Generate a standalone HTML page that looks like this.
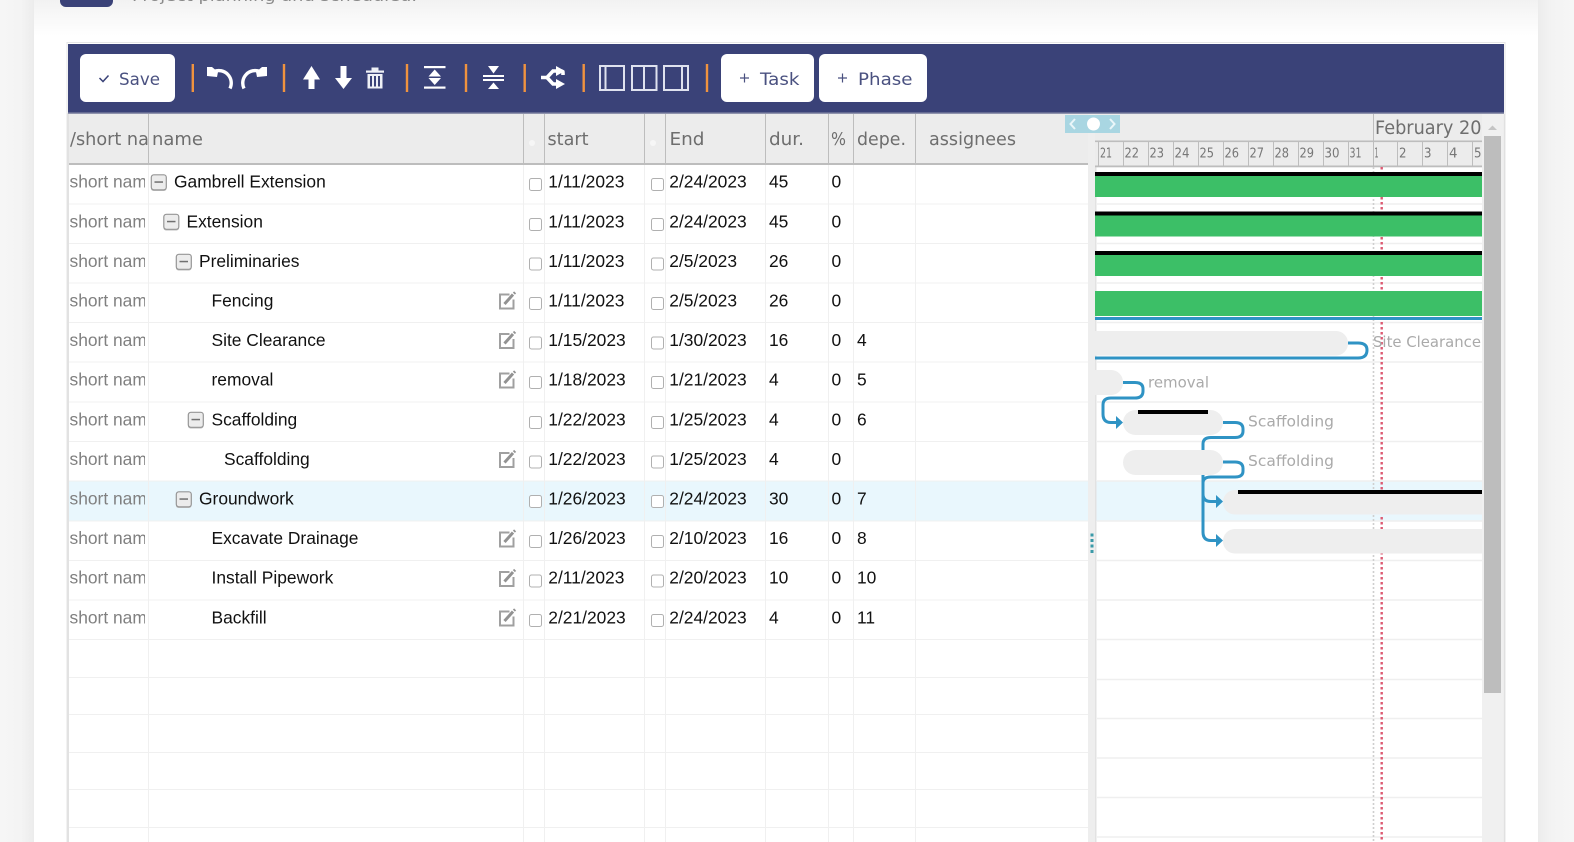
<!DOCTYPE html>
<html><head><meta charset="utf-8"><title>Gantt</title>
<style>
html,body{margin:0;padding:0;width:1574px;height:842px;overflow:hidden;background:#fff}
svg{display:block}
.h{font:17.5px "DejaVu Sans",sans-serif;fill:#6e6e6e}
.t{font:17.4px "Liberation Sans",Arial,sans-serif;fill:#111}
.s{font:17.4px "Liberation Sans",Arial,sans-serif;fill:#808080}
.d{font:13.5px "DejaVu Sans",sans-serif;fill:#777}
.l{font:15px "DejaVu Sans",sans-serif;fill:#aaa}
.b{font:16.5px "DejaVu Sans",sans-serif;fill:#4a5180}
.gl{stroke:#f0f0f0;stroke-width:1}
.vl{stroke:#f0f0f0;stroke-width:1}
.hv{stroke:#bdbdbd;stroke-width:1}
.sep{stroke:#f0933f;stroke-width:2.4}
.lnk{fill:none;stroke:#2f93c4;stroke-width:3}
</style></head><body>
<svg xmlns="http://www.w3.org/2000/svg" width="1574" height="842" viewBox="0 0 1574 842">
<defs>
<linearGradient id="lg" x1="0" x2="1" y1="0" y2="0"><stop offset="0" stop-color="#f6f6f6"/><stop offset=".6" stop-color="#f4f4f4"/><stop offset="1" stop-color="#ececec"/></linearGradient>
<linearGradient id="rg" x1="0" x2="1" y1="0" y2="0"><stop offset="0" stop-color="#ececec"/><stop offset=".4" stop-color="#f3f3f3"/><stop offset="1" stop-color="#f6f6f6"/></linearGradient>
<linearGradient id="tg" x1="0" x2="0" y1="0" y2="1"><stop offset="0" stop-color="#f2f2f2"/><stop offset="1" stop-color="#ffffff"/></linearGradient>
<clipPath id="c1"><rect x="68" y="114" width="77" height="560"/></clipPath>
<clipPath id="c0"><rect x="68" y="114" width="80" height="50"/></clipPath>
<clipPath id="c2"><rect x="1095" y="114" width="387" height="728"/></clipPath>
<g id="cb"><rect x="0.5" y="0.5" width="12" height="12" rx="2" fill="#fff" stroke="#b0b0b0"/></g>
<g id="mn"><rect x="0.5" y="1.500" width="15.500" height="15.500" rx="2.500" fill="#bdbdbd"/><rect x="0.8" y="0.8" width="15" height="15" rx="2.500" fill="#ececec" stroke="#969696" stroke-width="1.200"/><rect x="4" y="7.300" width="8.500" height="1.500" fill="#707070"/></g>
<g id="ed"><path d="M11 3H1.500V17H15V8" fill="none" stroke="#a0a0a0" stroke-width="2"/><path d="M6 12.500L14.500 3" stroke="#929292" stroke-width="3" fill="none"/><path d="M15 0.500L17 2.500" stroke="#929292" stroke-width="1.800" fill="none"/></g>
</defs>

<rect width="1574" height="842" fill="#fff"/>
<rect x="0" y="0" width="34" height="842" fill="url(#lg)"/>
<rect x="1538" y="0" width="36" height="842" fill="url(#rg)"/>
<rect x="34" y="0" width="1504" height="36" fill="url(#tg)"/>

<path d="M60 0H113V1a6 6 0 0 1-6 6H66a6 6 0 0 1-6-6z" fill="#3a4278"/>
<text x="132" y="1" font-family="DejaVu Sans, sans-serif" font-size="15" fill="#8a8a8a" textLength="285" lengthAdjust="spacingAndGlyphs">Project planning and scheduled.</text>

<!-- frame -->
<rect x="67" y="42.5" width="1438" height="800" fill="#fff" stroke="#e6e6e6"/>
<rect x="67" y="113" width="2" height="729" fill="#e2e2e2"/>

<!-- highlight row -->
<rect x="69" y="481" width="1019" height="40" fill="#e9f7fd"/>
<rect x="1096" y="481" width="386" height="40" fill="#e9f7fd"/>

<!-- grid row lines -->
<g class="gl">
<path d="M69 204H1088M69 243.5H1088M69 283H1088M69 322.5H1088M69 362H1088M69 402H1088M69 441.5H1088M69 481H1088M69 521H1088M69 560.5H1088M69 600H1088M69 639.5H1088M69 677.5H1088M69 714.5H1088M69 752.5H1088M69 789.5H1088M69 827.5H1088"/>
</g>
<g class="vl"><path d="M148.5 164V842M523.5 164V842M544.5 164V842M644.5 164V842M665.5 164V842M765.5 164V842M828.5 164V842M853.5 164V842M915.5 164V842"/></g>

<!-- table header -->
<rect x="69" y="114" width="1019" height="49" fill="#ececec"/>
<rect x="69" y="163" width="1019" height="2" fill="#bdbdbd"/>
<g class="hv"><path d="M148.5 114V163M523.5 114V163M544.5 114V163M644.5 114V163M665.5 114V163M765.5 114V163M828.5 114V163M853.5 114V163M915.5 114V163"/></g>
<circle cx="532" cy="143" r="3" fill="#f6f6f6"/><circle cx="653" cy="143" r="3" fill="#f6f6f6"/>
<g clip-path="url(#c0)"><text class="h" x="70" y="145" textLength="107" lengthAdjust="spacingAndGlyphs">/short name</text></g>
<text class="h" x="152" y="145" textLength="51" lengthAdjust="spacingAndGlyphs">name</text>
<text class="h" x="547.5" y="145" textLength="41" lengthAdjust="spacingAndGlyphs">start</text>
<text class="h" x="669.5" y="145" textLength="35" lengthAdjust="spacingAndGlyphs">End</text>
<text class="h" x="769" y="145" textLength="35" lengthAdjust="spacingAndGlyphs">dur.</text>
<text class="h" x="831" y="145" textLength="15" lengthAdjust="spacingAndGlyphs">%</text>
<text class="h" x="857" y="145" textLength="49" lengthAdjust="spacingAndGlyphs">depe.</text>
<text class="h" x="929" y="145" textLength="87" lengthAdjust="spacingAndGlyphs">assignees</text>

<!-- short name col -->
<g clip-path="url(#c1)">
<text class="s" x="69.5" y="187.7">short name</text>
<text class="s" x="69.5" y="227.3">short name</text>
<text class="s" x="69.5" y="266.9">short name</text>
<text class="s" x="69.5" y="306.5">short name</text>
<text class="s" x="69.5" y="346.1">short name</text>
<text class="s" x="69.5" y="385.7">short name</text>
<text class="s" x="69.5" y="425.3">short name</text>
<text class="s" x="69.5" y="464.9">short name</text>
<text class="s" x="69.5" y="504.5">short name</text>
<text class="s" x="69.5" y="544.1">short name</text>
<text class="s" x="69.5" y="583.7">short name</text>
<text class="s" x="69.5" y="623.3">short name</text>
</g>

<g transform="translate(0,-0.8)">
<!-- names -->
<text class="t" x="174" y="188.5">Gambrell Extension</text>
<text class="t" x="186.5" y="228.1">Extension</text>
<text class="t" x="199" y="267.7">Preliminaries</text>
<text class="t" x="211.5" y="307.3">Fencing</text>
<text class="t" x="211.5" y="346.9">Site Clearance</text>
<text class="t" x="211.5" y="386.5">removal</text>
<text class="t" x="211.5" y="426.1">Scaffolding</text>
<text class="t" x="224" y="465.7">Scaffolding</text>
<text class="t" x="199" y="505.3">Groundwork</text>
<text class="t" x="211.5" y="544.9">Excavate Drainage</text>
<text class="t" x="211.5" y="584.5">Install Pipework</text>
<text class="t" x="211.5" y="624.1">Backfill</text>

<!-- start dates -->
<text class="t" x="548.3" y="188.5">1/11/2023</text>
<text class="t" x="548.3" y="228.1">1/11/2023</text>
<text class="t" x="548.3" y="267.7">1/11/2023</text>
<text class="t" x="548.3" y="307.3">1/11/2023</text>
<text class="t" x="548.3" y="346.9">1/15/2023</text>
<text class="t" x="548.3" y="386.5">1/18/2023</text>
<text class="t" x="548.3" y="426.1">1/22/2023</text>
<text class="t" x="548.3" y="465.7">1/22/2023</text>
<text class="t" x="548.3" y="505.3">1/26/2023</text>
<text class="t" x="548.3" y="544.9">1/26/2023</text>
<text class="t" x="548.3" y="584.5">2/11/2023</text>
<text class="t" x="548.3" y="624.1">2/21/2023</text>
<!-- end dates -->
<text class="t" x="669.3" y="188.5">2/24/2023</text>
<text class="t" x="669.3" y="228.1">2/24/2023</text>
<text class="t" x="669.3" y="267.7">2/5/2023</text>
<text class="t" x="669.3" y="307.3">2/5/2023</text>
<text class="t" x="669.3" y="346.9">1/30/2023</text>
<text class="t" x="669.3" y="386.5">1/21/2023</text>
<text class="t" x="669.3" y="426.1">1/25/2023</text>
<text class="t" x="669.3" y="465.7">1/25/2023</text>
<text class="t" x="669.3" y="505.3">2/24/2023</text>
<text class="t" x="669.3" y="544.9">2/10/2023</text>
<text class="t" x="669.3" y="584.5">2/20/2023</text>
<text class="t" x="669.3" y="624.1">2/24/2023</text>
<!-- dur -->
<text class="t" x="769" y="188.5">45</text>
<text class="t" x="769" y="228.1">45</text>
<text class="t" x="769" y="267.7">26</text>
<text class="t" x="769" y="307.3">26</text>
<text class="t" x="769" y="346.9">16</text>
<text class="t" x="769" y="386.5">4</text>
<text class="t" x="769" y="426.1">4</text>
<text class="t" x="769" y="465.7">4</text>
<text class="t" x="769" y="505.3">30</text>
<text class="t" x="769" y="544.9">16</text>
<text class="t" x="769" y="584.5">10</text>
<text class="t" x="769" y="624.1">4</text>
<!-- pct -->
<text class="t" x="831.5" y="188.5">0</text>
<text class="t" x="831.5" y="228.1">0</text>
<text class="t" x="831.5" y="267.7">0</text>
<text class="t" x="831.5" y="307.3">0</text>
<text class="t" x="831.5" y="346.9">0</text>
<text class="t" x="831.5" y="386.5">0</text>
<text class="t" x="831.5" y="426.1">0</text>
<text class="t" x="831.5" y="465.7">0</text>
<text class="t" x="831.5" y="505.3">0</text>
<text class="t" x="831.5" y="544.9">0</text>
<text class="t" x="831.5" y="584.5">0</text>
<text class="t" x="831.5" y="624.1">0</text>
<!-- deps -->
<text class="t" x="857" y="346.9">4</text>
<text class="t" x="857" y="386.5">5</text>
<text class="t" x="857" y="426.1">6</text>
<text class="t" x="857" y="505.3">7</text>
<text class="t" x="857" y="544.9">8</text>
<text class="t" x="857" y="584.5">10</text>
<text class="t" x="857" y="624.1">11</text>
</g>

<!-- collapse boxes -->
<use href="#mn" x="150.500" y="174"/>
<use href="#mn" x="163" y="213.500"/>
<use href="#mn" x="175.500" y="253.500"/>
<use href="#mn" x="187.500" y="411.500"/>
<use href="#mn" x="175.500" y="491"/>

<!-- edit icons -->
<use href="#ed" x="498.500" y="291.500"/>
<use href="#ed" x="498.500" y="331"/>
<use href="#ed" x="498.500" y="370.500"/>
<use href="#ed" x="498.500" y="450"/>
<use href="#ed" x="498.500" y="529.500"/>
<use href="#ed" x="498.500" y="569"/>
<use href="#ed" x="498.500" y="608.500"/>

<!-- start checkboxes -->
<use href="#cb" x="529" y="178"/><use href="#cb" x="529" y="218"/><use href="#cb" x="529" y="257.5"/><use href="#cb" x="529" y="297"/><use href="#cb" x="529" y="336.5"/><use href="#cb" x="529" y="376"/><use href="#cb" x="529" y="416"/><use href="#cb" x="529" y="455.5"/><use href="#cb" x="529" y="495"/><use href="#cb" x="529" y="535"/><use href="#cb" x="529" y="574.5"/><use href="#cb" x="529" y="614"/>
<!-- end checkboxes -->
<use href="#cb" x="651" y="178"/><use href="#cb" x="651" y="218"/><use href="#cb" x="651" y="257.5"/><use href="#cb" x="651" y="297"/><use href="#cb" x="651" y="336.5"/><use href="#cb" x="651" y="376"/><use href="#cb" x="651" y="416"/><use href="#cb" x="651" y="455.5"/><use href="#cb" x="651" y="495"/><use href="#cb" x="651" y="535"/><use href="#cb" x="651" y="574.5"/><use href="#cb" x="651" y="614"/>

<!-- splitter -->
<rect x="1088" y="114" width="7" height="728" fill="#eeeeee"/>
<rect x="1095" y="166" width="1.500" height="676" fill="#e2e2e2"/>
<g fill="#3b9aa8"><rect x="1090.5" y="533.5" width="3" height="3"/><rect x="1090.5" y="539" width="3" height="3"/><rect x="1090.5" y="544.5" width="3" height="3"/><rect x="1090.5" y="550" width="3" height="3"/></g>

<!-- gantt header -->
<rect x="1095" y="114" width="387" height="52" fill="#ececec"/>
<rect x="1095" y="140.5" width="387" height="1.6" fill="#bdbdbd"/>
<rect x="1095" y="165.5" width="387" height="1.8" fill="#bdbdbd"/>
<g class="hv"><path d="M1373.5 114V166M1098.5 141V166M1123.5 141V166M1148.5 141V166M1173.5 141V166M1198.5 141V166M1223.5 141V166M1248.5 141V166M1273.5 141V166M1298.5 141V166M1323.5 141V166M1348.5 141V166M1397.5 141V166M1422.5 141V166M1447.5 141V166M1472.5 141V166"/></g>
<g clip-path="url(#c2)">
<text x="1375" y="134" font-family="DejaVu Sans, sans-serif" font-size="18.500" fill="#6e6e6e" textLength="129" lengthAdjust="spacingAndGlyphs">February 2023</text>
<text class="d" x="1100" y="157.5" textLength="12" lengthAdjust="spacingAndGlyphs">21</text>
<text class="d" x="1124.5" y="157.5" textLength="14.500" lengthAdjust="spacingAndGlyphs">22</text>
<text class="d" x="1149.5" y="157.5" textLength="14.500" lengthAdjust="spacingAndGlyphs">23</text>
<text class="d" x="1174.5" y="157.5" textLength="15" lengthAdjust="spacingAndGlyphs">24</text>
<text class="d" x="1199.5" y="157.5" textLength="14.500" lengthAdjust="spacingAndGlyphs">25</text>
<text class="d" x="1224.5" y="157.5" textLength="14.500" lengthAdjust="spacingAndGlyphs">26</text>
<text class="d" x="1249.5" y="157.5" textLength="14.500" lengthAdjust="spacingAndGlyphs">27</text>
<text class="d" x="1274.5" y="157.5" textLength="14.500" lengthAdjust="spacingAndGlyphs">28</text>
<text class="d" x="1299.5" y="157.5" textLength="14.500" lengthAdjust="spacingAndGlyphs">29</text>
<text class="d" x="1324.5" y="157.5" textLength="15" lengthAdjust="spacingAndGlyphs">30</text>
<text class="d" x="1349.5" y="157.5" textLength="12" lengthAdjust="spacingAndGlyphs">31</text>
<text class="d" x="1374.5" y="157.5" textLength="4" lengthAdjust="spacingAndGlyphs">1</text>
<text class="d" x="1399" y="157.5" textLength="7.500" lengthAdjust="spacingAndGlyphs">2</text>
<text class="d" x="1424" y="157.5" textLength="7.500" lengthAdjust="spacingAndGlyphs">3</text>
<text class="d" x="1449" y="157.5" textLength="8.500" lengthAdjust="spacingAndGlyphs">4</text>
<text class="d" x="1474" y="157.5" textLength="7.500" lengthAdjust="spacingAndGlyphs">5</text>
</g>

<!-- nav control -->
<rect x="1065" y="115" width="55" height="18" fill="#a9d6e2"/>
<circle cx="1093.5" cy="124" r="6.5" fill="#fff"/>
<path d="M1075 119l-4.5 5 4.500 5M1110 119l4.500 5-4.500 5" fill="none" stroke="#eaf6f9" stroke-width="2"/>

<!-- gantt grid -->
<g stroke="#efefef" stroke-width="1.4"><path d="M1097 204H1482M1097 243.5H1482M1097 283H1482M1097 322.5H1482M1097 362H1482M1097 402H1482M1097 441.5H1482M1097 481H1482M1097 521H1482M1097 560.5H1482M1097 600H1482M1097 639.5H1482M1097 679.5H1482M1097 718.5H1482M1097 758H1482M1097 797.5H1482M1097 837H1482"/></g>

<!-- today lines -->
<path d="M1373.5 167V842" stroke="#cfcfcf" stroke-width="1.6" stroke-dasharray="2 2"/>
<path d="M1381.7 167V842" stroke="#dc5a72" stroke-width="2.400" stroke-dasharray="2.500 2.500"/>

<!-- bars -->
<g clip-path="url(#c2)">
<rect x="1095" y="176" width="387" height="21" fill="#3cbf67"/><rect x="1095" y="172" width="387" height="4" fill="#000"/>
<rect x="1095" y="215.5" width="387" height="21" fill="#3cbf67"/><rect x="1095" y="211.5" width="387" height="4" fill="#000"/>
<rect x="1095" y="255" width="387" height="21" fill="#3cbf67"/><rect x="1095" y="251" width="387" height="4" fill="#000"/>
<rect x="1095" y="291" width="387" height="25" fill="#3cbf67"/><rect x="1095" y="317" width="387" height="3" fill="#2f93c4"/>

<rect x="1070" y="331" width="278" height="24.5" rx="12" fill="#eeeeee"/>
<rect x="1070" y="370" width="53" height="25" rx="12" fill="#eeeeee"/>
<rect x="1123" y="410" width="100" height="25" rx="12.5" fill="#eeeeee"/>
<rect x="1123" y="450" width="100" height="25" rx="12.5" fill="#eeeeee"/>
<rect x="1223" y="490" width="300" height="24.5" rx="12" fill="#eeeeee"/>
<rect x="1223" y="529" width="300" height="24.5" rx="12" fill="#eeeeee"/>
<rect x="1138" y="410" width="70" height="4" fill="#000"/>
<rect x="1238" y="490" width="244" height="4" fill="#000"/>

<path class="lnk" d="M1348 343H1358Q1367 343 1367 350V350Q1367 358 1358 358H1095"/>
<path class="lnk" d="M1123 382.5H1135Q1143 382.5 1143 389V391Q1143 398 1135 398H1111Q1103 398 1103 405V414Q1103 422.5 1111 422.5H1118"/>
<path d="M1116 416L1123 422.5L1116 429z" fill="#2f93c4"/>
<path class="lnk" d="M1223 422.5H1235Q1243 422.5 1243 429V431Q1243 437.5 1235 437.5H1211Q1203 437.5 1203 444V450"/>
<path class="lnk" d="M1223 462H1235Q1243 462 1243 468.500V471Q1243 477 1235 477H1211Q1203 477 1203 483V532Q1203 540.500 1211 540.500H1218"/>
<path class="lnk" d="M1203 475V494Q1203 501.500 1211 501.500H1218"/>
<path d="M1216 495L1223 501.500L1216 508z" fill="#2f93c4"/>
<path d="M1216 534L1223 540.500L1216 547z" fill="#2f93c4"/>

<text class="l" x="1373" y="347" textLength="108" lengthAdjust="spacingAndGlyphs">Site Clearance</text>
<text class="l" x="1148" y="387.500" textLength="61" lengthAdjust="spacingAndGlyphs">removal</text>
<text class="l" x="1248" y="426.500" textLength="86" lengthAdjust="spacingAndGlyphs">Scaffolding</text>
<text class="l" x="1248" y="466" textLength="86" lengthAdjust="spacingAndGlyphs">Scaffolding</text>
</g>

<!-- scrollbar -->
<rect x="1482" y="114" width="21" height="728" fill="#f0f0f0"/>
<rect x="1484" y="136" width="17" height="557" fill="#bdbdbd"/>
<path d="M1488 130L1492.500 125.500L1497 130z" fill="#c4c4c4"/>
<rect x="1503.500" y="114" width="1" height="728" fill="#dcdcdc"/>

<!-- toolbar -->
<rect x="68" y="44" width="1436" height="69" fill="#3a4278"/>
<rect x="68" y="112.500" width="1436" height="1.500" fill="#8f93ad"/>

<rect x="80" y="54" width="95" height="48" rx="6" fill="#fff"/>
<path d="M99.500 78l3.500 3.500 5.500-6" fill="none" stroke="#3a4278" stroke-width="1.500"/>
<text class="b" x="119" y="85" textLength="41" lengthAdjust="spacingAndGlyphs">Save</text>

<rect x="721" y="54" width="93" height="48" rx="6" fill="#fff"/>
<path d="M744.500 73.500v9M740 78h9" stroke="#4a5180" stroke-width="1.200" fill="none"/>
<text class="b" x="760" y="85" textLength="39.500" lengthAdjust="spacingAndGlyphs">Task</text>

<rect x="819" y="54" width="108" height="48" rx="6" fill="#fff"/>
<path d="M842.500 73.500v9M838 78h9" stroke="#4a5180" stroke-width="1.200" fill="none"/>
<text class="b" x="858" y="85" textLength="54.500" lengthAdjust="spacingAndGlyphs">Phase</text>

<g class="sep"><path d="M192.800 64V92M284 64V92M407 64V92M466 64V92M524.700 64V92M583.700 64V92M707 64V92"/></g>

<!-- undo / redo -->
<g fill="#fff">
<path d="M207 67V76L217 77L218 72L212 67z"/>
<path d="M214 71.500A12.500 12.500 0 0 1 230 88.500" fill="none" stroke="#fff" stroke-width="3.400"/>
<path d="M267 67V76L257 77L256 72L262 67z"/>
<path d="M260 71.500A12.500 12.500 0 0 0 244 88.500" fill="none" stroke="#fff" stroke-width="3.400"/>
</g>
<!-- up / down -->
<path d="M311.500 66L320 79.500H314.500V89H308.500V79.500H303z" fill="#fff"/>
<path d="M340.500 66H346.500V78H352L343.500 89L335 78H340.500z" fill="#fff"/>
<!-- trash -->
<g fill="#eef0f6">
<rect x="366" y="70.500" width="18" height="2.200"/><rect x="371.500" y="67.500" width="7" height="3"/>
<path d="M367.500 74H382.500V88.500H367.500zM370 76V86.500H372V76zM374 76V86.500H376V76zM378 76V86.500H380V76z" fill-rule="evenodd"/>
</g>
<!-- expand -->
<g fill="#fff">
<rect x="424" y="66" width="21.500" height="2.200"/><rect x="424" y="86.500" width="21.500" height="2.200"/>
<path d="M434.700 69.500L441 76.500H428.500z"/><path d="M428.500 78H441L434.700 85z"/>
</g>
<!-- collapse -->
<g fill="#fff">
<path d="M488 66H499L493.500 73.500z"/><rect x="483" y="75" width="21" height="2"/><rect x="483" y="79" width="21" height="2"/><path d="M493.500 82.500L499 89H488z"/>
</g>
<!-- shuffle-like -->
<g fill="none" stroke="#fff" stroke-width="3.600">
<path d="M541 77.500H547L553 71H561Q563 71 563 73V75"/><path d="M547 77.500L553 84H561"/>
</g>
<path d="M556 66L565 71L556 76zM556 79L565 84L556 89z" fill="#fff"/>
<!-- layouts -->
<g fill="none" stroke="#dfe2ef" stroke-width="2">
<rect x="600" y="66" width="24" height="24"/><path d="M605.500 66V90"/>
<rect x="632" y="66" width="24.500" height="24"/><path d="M644 66V90"/>
<rect x="664" y="66" width="24" height="24"/><path d="M682 66V90"/>
</g>
</svg>
</body></html>
